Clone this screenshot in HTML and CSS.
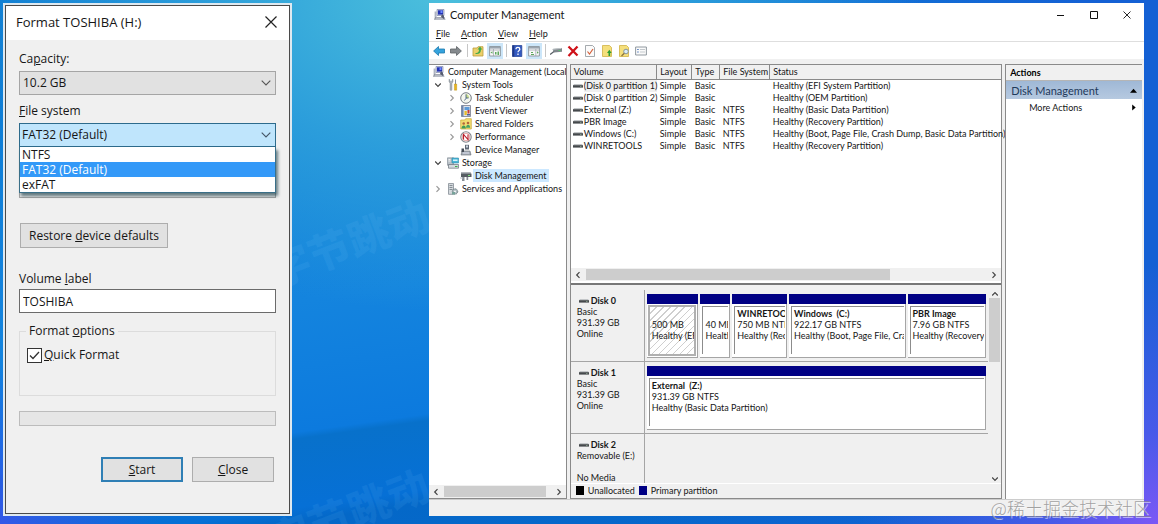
FILE: index.html
```html
<!DOCTYPE html>
<html lang="en">
<head>
<meta charset="utf-8">
<title>Computer Management</title>
<link rel="stylesheet" href="styles.css">
</head>
<body>
<svg class="sprite" aria-hidden="true">
  <symbol id="i-computer" viewBox="0 0 12 12">
    <path d="M3 0.5h7v6H3z" fill="#c9cfe6" stroke="#8088a8" stroke-width=".7"/>
    <path d="M4 1.3h5v4.3H4z" fill="#2433b4"/><path d="M6.5 1.5h2v2.500h-2z" fill="#6f8bff"/>
    <path d="M.6 2.500h2v6h-2z" fill="#aeb4c2"/><path d="M1 8h9.500l1 2.800H0z" fill="#8d93a0"/>
    <path d="M2 9h7M1.500 10h9" stroke="#dfe3ea" stroke-width=".6"/><path d="M8 5l2 2v3l-3-2z" fill="#555c70"/>
  </symbol>
  <symbol id="i-tools" viewBox="0 0 12 12">
    <path d="M2 0v3l1 1v6.500a1 1 0 0 0 2 0V4l1-1V0L5 1v1.500H3V1z" fill="#aab0b8" stroke="#7c838c" stroke-width=".4"/>
    <path d="M8.500 0.500v5" stroke="#8a8f96" stroke-width="1"/><path d="M7.400 5h2.300v6.200H7.400z" fill="#e9b51c" stroke="#b4860c" stroke-width=".4"/>
  </symbol>
  <symbol id="i-clock" viewBox="0 0 12 12">
    <circle cx="6" cy="6" r="5.300" fill="#f4f6ee" stroke="#777d84" stroke-width="1"/>
    <path d="M6 2v4h3A4 4 0 0 0 6 2z" fill="#c9db8a"/><path d="M6 2.300V6.300L4.500 8.500M6 6h2.500" fill="none" stroke="#33507a" stroke-width=".8"/>
  </symbol>
  <symbol id="i-event" viewBox="0 0 12 12">
    <path d="M1.500.5h9v11h-9z" fill="#dfe2e8" stroke="#777b8c" stroke-width=".8"/><path d="M1.500.5h2v11h-2z" fill="#6f86ad"/>
    <path d="M4.500 2h5v3h-5z" fill="#5c9ad8"/><path d="M4.500 6h2.300v4H4.500z" fill="#e6bd2b"/><path d="M7.500 5h2v3.500h-2z" fill="#c63a35"/><path d="M7 9h3v1.500H7z" fill="#4b64a0"/>
  </symbol>
  <symbol id="i-shared" viewBox="0 0 12 12">
    <path d="M.7 2h4l1-1.300h5.600V11H.7z" fill="#f2dd72" stroke="#c6a636" stroke-width=".7"/>
    <circle cx="3.700" cy="5.500" r="1.300" fill="#b3653b"/><path d="M1.500 10.500c0-4 4.400-4 4.400 0z" fill="#3f9b58"/>
    <circle cx="8" cy="5" r="1.300" fill="#b3653b"/><path d="M6 9.800c0-4 4.200-4 4.200 0z" fill="#49a364"/>
  </symbol>
  <symbol id="i-perf" viewBox="0 0 12 12">
    <circle cx="6" cy="6" r="5.200" fill="#fff" stroke="#80868c" stroke-width="1.100"/><circle cx="6" cy="6" r="3.800" fill="none" stroke="#d26a6a" stroke-width=".6"/>
    <path d="M3.500 8.500v-5l4.500 5v-5" fill="none" stroke="#b91f2c" stroke-width="1.100"/>
  </symbol>
  <symbol id="i-device" viewBox="0 0 12 12">
    <path d="M5 .8h4v4.700H5z" fill="#5f6875"/><path d="M6 1.500h2v2H6z" fill="#cdd6e0"/><path d="M2 7h8l1 4H1z" fill="#aab1ba" stroke="#646b74" stroke-width=".6"/>
    <path d="M1.500 4.500h2.500V8H1.500z" fill="#444b56"/><path d="M3 9h6" stroke="#eef" stroke-width=".7"/>
  </symbol>
  <symbol id="i-storage" viewBox="0 0 12 12">
    <path d="M.5.8h6v7.500h-6z" fill="#b9c1c8" stroke="#7b858e" stroke-width=".6"/><path d="M5 1h6.500v5H5z" fill="#4bb7d8" stroke="#2d87a8" stroke-width=".6"/>
    <path d="M6 2.500h4.500v1.500H6z" fill="#d8f2fb"/><path d="M1.500 7.500h10v3.700h-10z" fill="#d4dadf" stroke="#68717a" stroke-width=".7"/><path d="M8 9h2.500v1H8z" fill="#3fae49"/><path d="M1.500 2.500h2M1.500 4h2" stroke="#fff" stroke-width=".8"/>
  </symbol>
  <symbol id="i-diskmgmt" viewBox="0 0 12 12">
    <path d="M1 2.500h9.500l1 1.500v3H1z" fill="#565c62"/><path d="M1 2.500h9.500l.6 1H1z" fill="#b6bcc2"/><path d="M8 5h2v1H8z" fill="#7de07c"/>
    <path d="M2 7h2.500v4H2zM6.500 7h1.700v3H6.500z" fill="#868c94"/><path d="M0 8h3" stroke="#b9bec5" stroke-width="1"/>
  </symbol>
  <symbol id="i-services" viewBox="0 0 12 12">
    <path d="M1.500.5h5v10.800h-5z" fill="#d5dade" stroke="#858d95" stroke-width=".8"/><path d="M2.500 2.500h3M2.500 4.500h3M2.500 6.500h3" stroke="#707880" stroke-width=".8"/>
    <circle cx="8" cy="8.500" r="2.700" fill="#a9b8bd" stroke="#6c797e" stroke-width=".9" stroke-dasharray="1.400 .6"/><circle cx="8" cy="8.500" r=".9" fill="#fff"/><path d="M5 9h3v2.500H5z" fill="#77a39a"/>
  </symbol>
  <symbol id="i-drive" viewBox="0 0 10 6">
    <path d="M1 1h8l1 1.500H0z" fill="#c3c6c8"/><path d="M0 2.200h10v2.400H0z" fill="#45494c"/><path d="M7 3h1.500v.8H7z" fill="#8fae93"/>
  </symbol>
  <symbol id="i-back" viewBox="0 0 12 12"><path d="M.6 6L5.500 1.500V4h6v4h-6v2.500z" fill="#35a3dd" stroke="#1c78ad" stroke-width=".8"/></symbol>
  <symbol id="i-forward" viewBox="0 0 12 12"><path d="M11.400 6L6.500 1.500V4h-6v4h6v2.500z" fill="#858a8e" stroke="#5d6266" stroke-width=".8"/></symbol>
  <symbol id="i-folderup" viewBox="0 0 12 12"><path d="M1 3h4l1-1.300h5V11H1z" fill="#ecd06a" stroke="#bb9c3e" stroke-width=".8"/><path d="M3.500 8c3 0 3.500-1.500 3.500-3.500H5.500L8 1.500l2.300 3H9C9 8 7 9.500 3.500 9z" fill="#48a94a"/></symbol>
  <symbol id="i-tree" viewBox="0 0 12 12"><path d="M.6 1.500h10.800v9.500H.6z" fill="#f7f8f9" stroke="#8a939b" stroke-width=".9"/><path d="M.8 2h10.400v1.600H.8z" fill="#9aa5af"/><path d="M4.500 4v7M1 5h10" stroke="#98a1a9" stroke-width=".7"/><path d="M3.500 6.300v2.500L1.500 7.500zM6 7h1.500v2.500H6zM8.500 6.500h1.500V10H8.500z" fill="#5da85e"/></symbol>
  <symbol id="i-help" viewBox="0 0 12 12"><path d="M1.500.5h9.300v11H1.500z" fill="#345ac0" stroke="#203d90" stroke-width=".7"/><path d="M1.500.5h1.800v11H1.500z" fill="#1f3886"/><path d="M5 4.200c0-2.400 3.800-2.300 3.800 0C8.800 5.600 7 5.700 7 7.300M7 8.600v1.300" fill="none" stroke="#fff" stroke-width="1.300"/></symbol>
  <symbol id="i-panel" viewBox="0 0 12 12"><path d="M.6 1.500h10.800v9.500H.6z" fill="#f7f8f9" stroke="#8a939b" stroke-width=".9"/><path d="M.8 2h10.400v1.600H.8z" fill="#9aa5af"/><path d="M7.800 4v7M1 5h10" stroke="#98a1a9" stroke-width=".7"/><path d="M9 6.300v2.500l1.700-1.200zM3 7h2v1H3zM3 9h3v1H3z" fill="#5da85e"/></symbol>
  <symbol id="i-plug" viewBox="0 0 12 12"><path d="M2.500 4L12 3v3.800L4 7.500z" fill="#7e868b"/><path d="M3 4.300l8.500-.9" stroke="#c3c9cc" stroke-width="1"/><path d="M0 9.500l4-3" stroke="#555d63" stroke-width="1.300"/><path d="M8.500 5h2v1h-2z" fill="#59c46a"/></symbol>
  <symbol id="i-delete" viewBox="0 0 12 12"><path d="M1.500 1.500L6 6M10.500 1.500L1.500 11M6 6l4.500 4.500" stroke="#cf1118" stroke-width="2.300" fill="none"/></symbol>
  <symbol id="i-doccheck" viewBox="0 0 12 12"><path d="M1.500.5h7l2 2v9h-9z" fill="#fbfbfb" stroke="#8e9499" stroke-width=".8"/><path d="M3.500 6.500l2 2.500 3.500-5" fill="none" stroke="#d5603a" stroke-width="1.200"/></symbol>
  <symbol id="i-pageup" viewBox="0 0 12 12"><path d="M1.500.5h7l2 2v9h-9z" fill="#f5df7c" stroke="#d0b246" stroke-width=".8"/><path d="M7.500 11V8H6l2.300-3.300L10.700 8H9.200v3z" fill="#2f9e33"/></symbol>
  <symbol id="i-pagefind" viewBox="0 0 12 12"><path d="M1.500.5h7l2 2v9h-9z" fill="#f5df7c" stroke="#d0b246" stroke-width=".8"/><circle cx="8" cy="6.500" r="2.300" fill="#d9edf8" stroke="#7c8c98" stroke-width=".9"/><path d="M6.300 8.300L3.500 11" stroke="#8a7440" stroke-width="1.300"/></symbol>
  <symbol id="i-list" viewBox="0 0 12 12"><path d="M.6 2h10.800v8H.6z" fill="#fafafa" stroke="#868e96" stroke-width=".9"/><path d="M2.200 4.500h1.500M2.200 7h1.500" stroke="#4a74b8" stroke-width="1.100"/><path d="M5 4.500h5M5 7h5" stroke="#b6bcc1" stroke-width=".8"/></symbol>
  <symbol id="i-chev" viewBox="0 0 8 8"><path d="M2.500 1.200L5.300 4 2.500 6.800" fill="none" stroke="currentColor" stroke-width="1.200"/></symbol>
</svg>

<div class="desktop">
  <div class="brand brand-top" aria-hidden="true">字节跳动</div>
  <div class="brand brand-bottom" aria-hidden="true">字节跳动</div>

  <form class="dialog">
    <header class="dialog-title">
      <h1>Format TOSHIBA (H:)</h1>
      <button type="button" class="close" aria-label="Close window"><svg viewBox="0 0 12 12"><path d="M.5.5l11 11M11.500.5l-11 11" stroke="#222" stroke-width="1.200"/></svg></button>
    </header>
    <div class="dialog-body">
      <label for="capacity">Ca<u>p</u>acity:</label>
      <div class="combo">
        <select id="capacity"><option>10.2 GB</option></select>
        <svg class="arrow" viewBox="0 0 10 6"><path d="M.7.7L5 5 9.300.7" fill="none" stroke="#555" stroke-width="1.100"/></svg>
      </div>
      <label for="fs"><u>F</u>ile system</label>
      <div class="combo open">
        <select id="fs"><option>FAT32 (Default)</option></select>
        <svg class="arrow" viewBox="0 0 10 6"><path d="M.7.7L5 5 9.300.7" fill="none" stroke="#456" stroke-width="1.100"/></svg>
        <ul class="options" role="listbox" aria-label="File system">
          <li role="option">NTFS</li>
          <li role="option" class="selected" aria-selected="true">FAT32 (Default)</li>
          <li role="option">exFAT</li>
        </ul>
      </div>
      <div class="combo allocation"><select aria-label="Allocation unit size"></select></div>
      <button type="button" class="push restore">Restore <u>d</u>evice defaults</button>
      <label for="vol">Volume <u>l</u>abel</label>
      <input id="vol" class="text" type="text" value="TOSHIBA">
      <fieldset>
        <legend>Format <u>o</u>ptions</legend>
        <label class="check"><input type="checkbox" checked><span><u>Q</u>uick Format</span></label>
      </fieldset>
      <div class="progress" role="progressbar" aria-label="Format progress"></div>
      <div class="actions-row">
        <button type="button" class="push default"><u>S</u>tart</button>
        <button type="button" class="push"><u>C</u>lose</button>
      </div>
    </div>
  </form>

  <main class="window">
    <header class="titlebar">
      <svg class="ico"><use href="#i-computer"/></svg>
      <h2>Computer Management</h2>
      <button type="button" aria-label="Minimize"><svg viewBox="0 0 10 10"><path d="M1 5.500h7" stroke="#111" stroke-width="1"/></svg></button>
      <button type="button" aria-label="Maximize"><svg viewBox="0 0 10 10"><path d="M1.500 1.500h7v7h-7z" fill="none" stroke="#111" stroke-width="1"/></svg></button>
      <button type="button" aria-label="Close"><svg viewBox="0 0 10 10"><path d="M1.500 1.500l7 7M8.500 1.500l-7 7" stroke="#111" stroke-width=".9"/></svg></button>
    </header>
    <nav class="menubar">
      <button type="button"><u>F</u>ile</button><button type="button"><u>A</u>ction</button><button type="button"><u>V</u>iew</button><button type="button"><u>H</u>elp</button>
    </nav>
    <div class="toolbar">
      <button type="button" aria-label="Back"><svg class="ico"><use href="#i-back"/></svg></button>
      <button type="button" aria-label="Forward"><svg class="ico"><use href="#i-forward"/></svg></button>
      <i class="sep"></i>
      <button type="button" aria-label="Up"><svg class="ico"><use href="#i-folderup"/></svg></button>
      <button type="button" class="on" aria-label="Console tree"><svg class="ico"><use href="#i-tree"/></svg></button>
      <i class="sep"></i>
      <button type="button" aria-label="Help"><svg class="ico"><use href="#i-help"/></svg></button>
      <button type="button" class="on" aria-label="Action pane"><svg class="ico"><use href="#i-panel"/></svg></button>
      <i class="sep"></i>
      <button type="button" aria-label="Connect"><svg class="ico"><use href="#i-plug"/></svg></button>
      <button type="button" aria-label="Delete"><svg class="ico"><use href="#i-delete"/></svg></button>
      <button type="button" aria-label="Properties"><svg class="ico"><use href="#i-doccheck"/></svg></button>
      <button type="button" aria-label="Open"><svg class="ico"><use href="#i-pageup"/></svg></button>
      <button type="button" aria-label="Find"><svg class="ico"><use href="#i-pagefind"/></svg></button>
      <button type="button" aria-label="List"><svg class="ico"><use href="#i-list"/></svg></button>
    </div>

    <div class="panes">
      <section class="tree-pane">
        <ul class="tree">
          <li class="root"><svg class="ico"><use href="#i-computer"/></svg><span>Computer Management (Local)</span></li>
          <li class="l1"><svg class="chev expanded"><use href="#i-chev"/></svg><svg class="ico"><use href="#i-tools"/></svg><span>System Tools</span></li>
          <li class="l2"><svg class="chev"><use href="#i-chev"/></svg><svg class="ico"><use href="#i-clock"/></svg><span>Task Scheduler</span></li>
          <li class="l2"><svg class="chev"><use href="#i-chev"/></svg><svg class="ico"><use href="#i-event"/></svg><span>Event Viewer</span></li>
          <li class="l2"><svg class="chev"><use href="#i-chev"/></svg><svg class="ico"><use href="#i-shared"/></svg><span>Shared Folders</span></li>
          <li class="l2"><svg class="chev"><use href="#i-chev"/></svg><svg class="ico"><use href="#i-perf"/></svg><span>Performance</span></li>
          <li class="l2 leaf"><svg class="ico"><use href="#i-device"/></svg><span>Device Manager</span></li>
          <li class="l1"><svg class="chev expanded"><use href="#i-chev"/></svg><svg class="ico"><use href="#i-storage"/></svg><span>Storage</span></li>
          <li class="l2 leaf current"><svg class="ico"><use href="#i-diskmgmt"/></svg><span>Disk Management</span></li>
          <li class="l1"><svg class="chev"><use href="#i-chev"/></svg><svg class="ico"><use href="#i-services"/></svg><span>Services and Applications</span></li>
        </ul>
        <div class="hscroll">
          <svg class="chev left"><use href="#i-chev"/></svg><div class="track"><div class="thumb tree-thumb"></div></div><svg class="chev"><use href="#i-chev"/></svg>
        </div>
      </section>

      <section class="center">
        <div class="volumes">
          <table>
            <colgroup><col class="c-vol"><col class="c-lay"><col class="c-type"><col class="c-fs"><col></colgroup>
            <thead><tr><th>Volume</th><th>Layout</th><th>Type</th><th>File System</th><th>Status</th></tr></thead>
            <tbody>
              <tr class="focus"><td><svg class="drive"><use href="#i-drive"/></svg><span>(Disk 0 partition 1)</span></td><td>Simple</td><td>Basic</td><td></td><td>Healthy (EFI System Partition)</td></tr>
              <tr><td><svg class="drive"><use href="#i-drive"/></svg><span>(Disk 0 partition 2)</span></td><td>Simple</td><td>Basic</td><td></td><td>Healthy (OEM Partition)</td></tr>
              <tr><td><svg class="drive"><use href="#i-drive"/></svg><span>External (Z:)</span></td><td>Simple</td><td>Basic</td><td>NTFS</td><td>Healthy (Basic Data Partition)</td></tr>
              <tr><td><svg class="drive"><use href="#i-drive"/></svg><span>PBR Image</span></td><td>Simple</td><td>Basic</td><td>NTFS</td><td>Healthy (Recovery Partition)</td></tr>
              <tr><td><svg class="drive"><use href="#i-drive"/></svg><span>Windows (C:)</span></td><td>Simple</td><td>Basic</td><td>NTFS</td><td>Healthy (Boot, Page File, Crash Dump, Basic Data Partition)</td></tr>
              <tr><td><svg class="drive"><use href="#i-drive"/></svg><span>WINRETOOLS</span></td><td>Simple</td><td>Basic</td><td>NTFS</td><td>Healthy (Recovery Partition)</td></tr>
            </tbody>
          </table>
          <div class="hscroll">
            <svg class="chev left"><use href="#i-chev"/></svg><div class="track"><div class="thumb vol-thumb"></div></div><svg class="chev"><use href="#i-chev"/></svg>
          </div>
        </div>

        <div class="graph">
          <div class="disks">
            <div class="disk">
              <div class="disk-info"><h3><svg class="drive"><use href="#i-drive"/></svg>Disk 0</h3><p>Basic</p><p>931.39 GB</p><p>Online</p></div>
              <div class="parts five">
                <div class="part hatched"><div><b>&nbsp;</b><p>500 MB</p><p>Healthy (EFI</p></div></div>
                <div class="part"><div><b>&nbsp;</b><p>40 MB</p><p>Healthy</p></div></div>
                <div class="part"><div><b>WINRETOOLS</b><p>750 MB NTFS</p><p>Healthy (Recovery</p></div></div>
                <div class="part"><div><b>Windows&nbsp; (C:)</b><p>922.17 GB NTFS</p><p>Healthy (Boot, Page File, Crash</p></div></div>
                <div class="part"><div><b>PBR Image</b><p>7.96 GB NTFS</p><p>Healthy (Recovery</p></div></div>
              </div>
            </div>
            <div class="disk">
              <div class="disk-info"><h3><svg class="drive"><use href="#i-drive"/></svg>Disk 1</h3><p>Basic</p><p>931.39 GB</p><p>Online</p></div>
              <div class="parts">
                <div class="part"><div><b>External&nbsp; (Z:)</b><p>931.39 GB NTFS</p><p>Healthy (Basic Data Partition)</p></div></div>
              </div>
            </div>
            <div class="disk last">
              <div class="disk-info"><h3><svg class="drive"><use href="#i-drive"/></svg>Disk 2</h3><p>Removable (E:)</p><p>&nbsp;</p><p>No Media</p></div>
              <div class="parts"></div>
            </div>
          </div>
          <div class="vscroll">
            <svg class="chev up"><use href="#i-chev"/></svg><div class="vtrack"><div class="vthumb"></div></div><svg class="chev expanded"><use href="#i-chev"/></svg>
          </div>
        </div>
        <div class="key"><i class="swatch black"></i><span>Unallocated</span><i class="swatch navy"></i><span>Primary partition</span></div>
      </section>

      <aside class="actions">
        <h3>Actions</h3>
        <button type="button" class="group">Disk Management<svg viewBox="0 0 8 8"><path d="M0 6.500L4 2l4 4.500z"/></svg></button>
        <button type="button" class="more">More Actions<svg viewBox="0 0 8 8"><path d="M2.500 0.500L6.500 4l-4 3.500z"/></svg></button>
      </aside>
    </div>
    <footer class="status"></footer>
  </main>
  <div class="credit">@稀土掘金技术社区</div>
</div>
</body>
</html>
```
FILE: styles.css
```css
* { box-sizing: border-box; }
body, h1, h2, h3, p, ul, fieldset { margin: 0; padding: 0; }
body { font-family: "Lato", "Noto Sans", sans-serif; color: #161616; }
button, select, input { font: inherit; color: inherit; border-radius: 0; }
button { padding: 0; border: 0; background: none; }
ul { list-style: none; }
svg { display: block; flex: none; }
u { text-underline-offset: 1px; text-decoration-thickness: 1px; }
.sprite { position: absolute; width: 0; height: 0; }

.desktop {
  position: relative;
  min-height: 100vh;
  overflow: hidden;
  display: grid;
  grid-template-columns: 289fr 715fr;
  column-gap: 12%;
  padding: 3px 14px 8px 3px;
  background:
    radial-gradient(ellipse 300px 260px at 100% 100%, #7b58f6 0%, rgba(90, 88, 240, .75) 35%, rgba(60, 90, 230, 0) 100%),
    radial-gradient(ellipse 160px 160px at 0 100%, #3358e8 0%, rgba(40, 90, 230, 0) 100%),
    radial-gradient(ellipse 480px 320px at 440px -10px, #4cc0dc 0%, rgba(50, 165, 220, .8) 50%, rgba(20, 130, 220, 0) 100%),
    linear-gradient(90deg, rgba(20, 96, 212, 0) 55%, #1460d4 95%),
    linear-gradient(172deg, #0e7bd2 0%, #1484de 50%, #0c7ade 69%, #0871cb 70%, #0670d6 80%, #0468c8 82%, #0a66cf 100%);
}
.brand {
  position: absolute;
  left: 264px;
  color: rgba(130, 205, 255, .09);
  font: 900 42px/1 "Noto Sans CJK SC", sans-serif;
  transform: rotate(-21deg);
  white-space: nowrap;
}
.brand-top { top: 220px; }
.brand-bottom { top: 490px; }

/* Format dialog */
.dialog {
  position: relative;
  display: flex;
  flex-direction: column;
  border: 2px solid #dfe9f0;
  outline: 1px solid #4a4a4a;
  outline-offset: -3px;
  background: #f0f0f0;
  font: 12px/16px "Open Sans", "Noto Sans", sans-serif;
}
.dialog-title {
  display: flex;
  align-items: center;
  justify-content: space-between;
  height: 34px;
  margin: 1px 1px 0;
  padding: 0 12px 3px 10px;
  background: #fff;
}
.dialog-title h1 { font-size: 13px; font-weight: 400; }
.close svg { width: 12px; height: 12px; }
.dialog-body { display: flex; flex-direction: column; padding: 11px 14px 0 14px; }
.combo { position: relative; }
.combo select {
  display: block;
  width: 100%;
  height: 24px;
  padding: 0 3px;
  appearance: none;
  border: 1px solid #a5a5a5;
  background: #e1e1e1;
  opacity: 1;
}
.dialog-body > .combo { margin: 4px 0 8px; }
.dialog-body > .combo.open { margin: 4px 0 27px; }
.combo.open select { border-color: #2d6b8c; background: #bfe5fc; padding: 0 2px; }
.arrow { position: absolute; right: 5px; top: 9px; width: 10px; height: 6px; }
.options {
  position: absolute;
  z-index: 2;
  top: 24px;
  left: 0;
  right: 0;
  border: 1px solid #3a6f88;
  border-top: 0;
  background: #fff;
  line-height: 15px;
  box-shadow: 2px 3px 3px rgba(10, 50, 60, .6);
}
.options li { padding-left: 2px; }
.options .selected { background: #3399f8; color: #fff; }
.dialog-body > .allocation { margin: 0 0 25px; }
.push { height: 25px; border: 1px solid #adadad; background: #e1e1e1; }
.restore { align-self: flex-start; margin: 0 0 23px 1px; padding: 0 8px; }
.text { height: 24px; margin: 2px 0 10px; padding: 0 3px; border: 1px solid #6b6b6b; background: #fff; }
fieldset { height: 73px; border: 1px solid #dcdcdc; padding: 0 7px; min-width: 0; }
legend { padding: 0 3px; margin-left: -1px; }
.check { display: flex; align-items: center; gap: 2px; margin-top: 8px; }
.check input {
  appearance: none;
  width: 15px;
  height: 15px;
  margin: 0;
  border: 1px solid #333;
  background: #fff;
}
.check input:checked {
  background: #fff url("data:image/svg+xml,%3Csvg xmlns='http://www.w3.org/2000/svg' viewBox='0 0 13 13'%3E%3Cpath d='M2 6.500L5 9.500 11 3' fill='none' stroke='%23333' stroke-width='1.300'/%3E%3C/svg%3E");
}
.progress { height: 15px; margin-top: 15px; border: 1px solid #bcbcbc; background: #e6e6e6; }
.actions-row { display: flex; justify-content: flex-end; gap: 9px; margin: 31px 2px 0 0; }
.actions-row .push { width: 82px; }
.push.default { border: 2px solid #2f7fb5; }

/* Management window */
.window {
  position: relative;
  display: flex;
  flex-direction: column;
  min-width: 0;
  background: #fff;
  font-size: 9px;
  line-height: 11px;
}
.ico { width: 12px; height: 12px; }
.chev { width: 8px; height: 8px; color: #444; }
.chev.expanded { transform: rotate(90deg); }
.chev.left { transform: rotate(180deg); }
.chev.up { transform: rotate(-90deg); }
.titlebar { display: flex; align-items: center; height: 23px; padding: 0 12px 0 5px; }
.titlebar h2 { flex: 1; margin-left: 4px; font-size: 11px; font-weight: 400; }
.titlebar button { margin-left: 23px; }
.titlebar button svg { width: 10px; height: 10px; }
.menubar { display: flex; gap: 11px; height: 16px; padding: 0 7px; border-bottom: 1px solid #dedede; }
.toolbar { display: flex; align-items: center; gap: 1px; height: 17px; padding: 0 2px; }
.toolbar button { display: flex; align-items: center; justify-content: center; width: 16px; height: 16px; }
.toolbar .on { background: #cce6f9; }
.sep { width: 1px; height: 13px; margin: 0 1px 0 2px; background: #c6c6c6; }
.panes {
  flex: 1;
  display: grid;
  grid-template-columns: 138fr 433fr 137fr;
  gap: 3px;
  padding: 5px 2px 0 0;
  background: #f0f0f0;
}
.tree-pane, .center, .actions { min-width: 0; border: 1px solid #8a8a8a; }
.tree-pane { display: flex; flex-direction: column; background: #fff; border-left: 0; }
.tree { flex: 1; }
.tree li { display: flex; align-items: center; height: 13px; white-space: nowrap; overflow: hidden; }
.tree span { padding: 0 2px; line-height: 13px; }
.tree .root { padding-left: 4px; gap: 1px; }
.l1 { padding-left: 5px; }
.l1 .ico { margin: 0 1px 0 5px; }
.l2 { padding-left: 19px; }
.l2 .ico { margin: 0 1px 0 4px; }
.l2.leaf { padding-left: 27px; }
.l2 .chev, .l1 .chev:not(.expanded) { color: #999; }
.current span { background: #cce8ff; }
.hscroll { display: flex; align-items: center; gap: 4px; height: 13px; padding: 0 3px; background: #f0f0f0; }
.track { flex: 1; }
.thumb { height: 11px; background: #cdcdcd; }
.tree-thumb { width: 96%; }
.vol-thumb { width: 76%; }

.center { display: flex; flex-direction: column; }
.volumes { display: flex; flex-direction: column; flex: 1; background: #fff; border-bottom: 2px solid #777; }
table { width: 100%; table-layout: fixed; border-collapse: collapse; margin-bottom: auto; }
.c-vol { width: 86px; } .c-lay { width: 35px; } .c-type { width: 28px; } .c-fs { width: 50px; }
th, td { height: 12px; padding: 0 0 0 3px; font-weight: 400; text-align: left; line-height: 12px; white-space: nowrap; }
th { height: 14px; background: #f0f0f0; border-right: 1px solid #8a8a8a; border-bottom: 1px solid #8a8a8a; }
th:last-child { border-right: 0; }
td:first-child { display: flex; align-items: center; gap: 1px; padding-left: 2px; }
.focus td:first-child span { background: #f0f0f0; }
.drive { width: 10px; height: 6px; }
.volumes .hscroll { margin-bottom: 2px; }

.graph { display: flex; background: #f0f0f0; padding-top: 5px; }
.disks { flex: 1; min-width: 0; }
.disk { display: grid; grid-template-columns: 74px 1fr; height: 72px; border-bottom: 1px solid #a5a5a5; }
.disk.last { height: 49px; border-bottom: 0; }
.disk-info { padding: 5px 0 0 6px; border-right: 1px solid #a5a5a5; white-space: nowrap; overflow: hidden; }
.disk-info h3 { display: flex; align-items: center; gap: 2px; margin-left: 2px; font-size: 9px; }
.parts { display: grid; gap: 2px; padding: 4px 2px 3px; min-width: 0; }
.five { grid-template-columns: 52fr 30fr 55fr 117fr 79fr; }
.part {
  display: flex;
  min-width: 0;
  border-top: 10px solid #000084;
  background: #fff;
  box-shadow: inset -1px -1px #a5a5a5;
}
.part > div { flex: 1; min-width: 0; margin: 2px 2px 4px 2px; padding: 1px 0 0 2px; border: solid #8c8c8c; border-width: 1px 0 0 1px; overflow: hidden; white-space: nowrap; }
.part b { display: block; }
.hatched > div {
  margin: 1px 2px 2px 1px;
  border: 2px solid #b0b0b0;
  background: repeating-linear-gradient(135deg, #fff 0 4px, #cfcfcf 4px 5px);
}
.vscroll { display: flex; flex-direction: column; align-items: center; width: 13px; }
.vtrack { flex: 1; width: 11px; }
.vthumb { height: 36%; background: #cdcdcd; }
.key { display: flex; align-items: center; gap: 4px; height: 15px; padding: 0 0 2px 5px; border-top: 1px solid #fff; background: #f0f0f0; }
.swatch { width: 8px; height: 9px; }
.black { background: #000; }
.navy { background: #000084; }

.actions { background: #fff; border-bottom: 0; border-right: 0; }
.actions h3 { height: 16px; padding: 2px 4px 0; border-bottom: 1px solid #b5b5b5; background: #f0f0f0; font-size: 9px; color: #000; }
.group, .more { display: flex; align-items: center; justify-content: space-between; width: 100%; padding-right: 5px; }
.group { height: 18px; padding-left: 5px; background: linear-gradient(#9fb8d6, #b6c9e0); color: #1e395b; font-size: 11px; }
.more { height: 16px; padding-left: 23px; }
.group svg, .more svg { width: 7px; height: 7px; }
.status { height: 17px; background: #f0f0f0; border-top: 1px solid #ccc; }
.credit {
  position: absolute;
  right: 7px;
  bottom: 3px;
  color: rgba(135, 135, 135, .75);
  font: 300 18px/26px "Noto Sans CJK SC", sans-serif;
  text-shadow: 1px 1px rgba(255, 255, 255, .6);
}
```
